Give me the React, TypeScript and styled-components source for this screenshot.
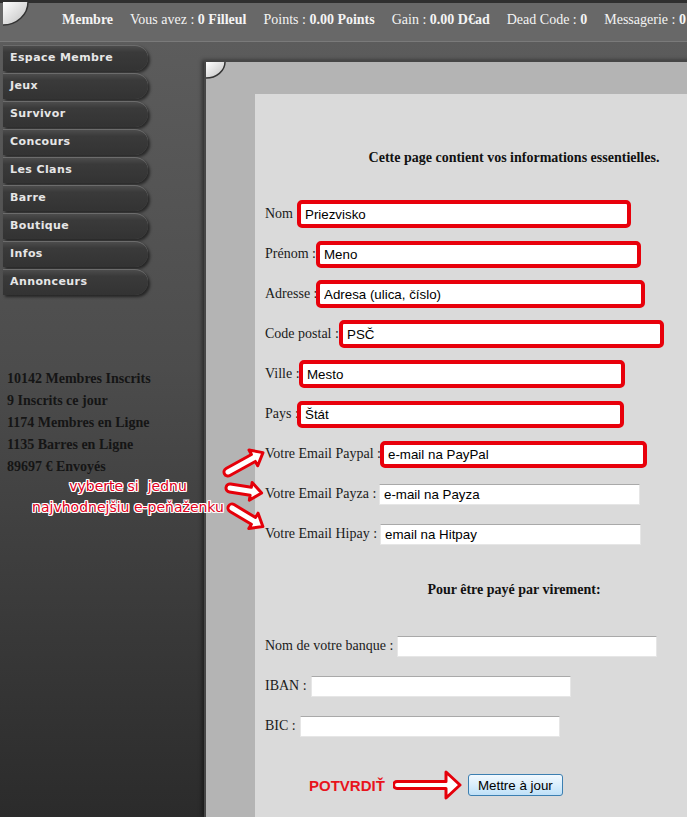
import styled, { createGlobalStyle } from "styled-components";

const GlobalStyle = createGlobalStyle`
  * { box-sizing: border-box; }
  html, body { margin: 0; padding: 0; background: #2b2b2b; overflow: hidden; }
`;

const Page = styled.div`
  position: relative;
  width: 687px;
  height: 817px;
  overflow: hidden;
  display: flex;
  flex-direction: column;
  font-family: "Liberation Serif", "Times New Roman", serif;
  background: linear-gradient(#5e5e5e, #4c4c4c 45%, #2b2b2b);
`;

const TopBar = styled.header`
  position: relative;
  flex: none;
  height: 42px;
  border-top: 3px solid #2f2f2f;
  border-bottom: 1px solid #7a7a7a;
  background: #686868;
  display: flex;
  gap: 17px;
  padding: 9px 0 0 62px;
  white-space: nowrap;
`;

const TopItem = styled.span`
  color: #f4f4f4;
  font-size: 14px;
  line-height: 16px;
`;

const B = styled.b`
  font-weight: bold;
`;

const CurlBox = styled.svg<{ $top: number; $left: number }>`
  position: absolute;
  top: ${(p) => p.$top}px;
  left: ${(p) => p.$left}px;
`;

const Body = styled.div`
  flex: 1;
  display: flex;
`;

const Sidebar = styled.aside`
  flex: none;
  width: 204px;
  padding-top: 3px;
  display: flex;
  flex-direction: column;
`;

const Menu = styled.nav`
  display: flex;
  flex-direction: column;
  gap: 2px;
`;

const MenuButton = styled.a`
  display: block;
  width: 145px;
  height: 26px;
  margin-left: 3px;
  padding-left: 7px;
  border-radius: 0 13px 13px 0;
  border-top: 1px solid #6c6c6c;
  background: linear-gradient(#4c4c4c, #3a3a3a 25%, #333 100%);
  box-shadow: 2px 2px 3px rgba(0, 0, 0, 0.55);
  color: #e6e6e6;
  font-family: "DejaVu Sans", Verdana, sans-serif;
  font-weight: bold;
  font-size: 11px;
  letter-spacing: 0.4px;
  line-height: 24px;
`;

const Stats = styled.div`
  margin-top: 73px;
  padding-left: 7px;
  color: #151515;
  font-weight: bold;
  font-size: 14px;
  line-height: 22px;
  white-space: nowrap;
`;

const Main = styled.main`
  flex: 1;
  padding-top: 18px;
  display: flex;
`;

const Panel = styled.section`
  position: relative;
  flex: 1;
  display: flex;
  border-top: 2px solid #464646;
  border-left: 2px solid #464646;
  background: #b4b4b4;
  padding: 32px 0 0 49px;
  box-shadow: -2px 0 4px rgba(0, 0, 0, 0.45);
`;

const Sheet = styled.div`
  flex: 1;
  background: #dadada;
  padding-left: 10px;
  color: #1a1a1a;
  font-size: 14px;
`;

const Heading = styled.h3<{ $top: number }>`
  width: 498px;
  margin: ${(p) => p.$top}px 0 28px;
  text-align: center;
  font-size: 14px;
  font-weight: bold;
  line-height: 16px;
  color: #111;
  white-space: nowrap;
`;

const Row = styled.div`
  display: flex;
  align-items: center;
  height: 40px;
`;

const Label = styled.label<{ $w: number }>`
  flex: none;
  width: ${(p) => p.$w}px;
  white-space: nowrap;
  line-height: 16px;
`;

const Field = styled.input<{ $w: number; $h: number; $red?: boolean }>`
  position: relative;
  flex: none;
  width: ${(p) => p.$w}px;
  height: ${(p) => p.$h}px;
  margin: 0;
  padding: 0 4px;
  background: #fff;
  color: #000;
  font-family: "Liberation Sans", Arial, sans-serif;
  font-size: 13.33px;
  outline: none;
  border: ${(p) => (p.$red ? "4px solid #e8000b" : "1px solid #e6e6e6")};
  border-top-color: ${(p) => (p.$red ? "#e8000b" : "#a9a9a9")};
  border-radius: ${(p) => (p.$red ? "5px" : "0")};
`;

const SubmitRow = styled.div`
  display: flex;
  align-items: center;
  height: 40px;
  margin-top: 19px;
  padding-left: 44px;
`;

const Confirm = styled.span`
  color: #e8141c;
  font-family: "Liberation Sans", Arial, sans-serif;
  font-weight: bold;
  font-size: 15px;
`;

const BigArrow = styled.svg`
  flex: none;
  margin-left: 8px;
`;

const UpdateButton = styled.button`
  flex: none;
  width: 95px;
  height: 22px;
  margin-left: 5px;
  padding: 0;
  border: 1px solid #3c7fb1;
  border-radius: 3px;
  background: linear-gradient(#f2f9ff, #d9eefc 50%, #bfe0f7);
  color: #000;
  font-family: "Liberation Sans", Arial, sans-serif;
  font-size: 13.33px;
`;

const Note = styled.div`
  position: absolute;
  left: 28px;
  top: 476px;
  width: 200px;
  text-align: center;
  color: #e0001b;
  font-family: "DejaVu Sans", Verdana, sans-serif;
  font-size: 14px;
  line-height: 21px;
  white-space: pre;
  text-shadow: 1px 0 #fff, -1px 0 #fff, 0 1px #fff, 0 -1px #fff, 1px 1px #fff,
    -1px -1px #fff, 1px -1px #fff, -1px 1px #fff;
`;

const ArrowLayer = styled.svg`
  position: absolute;
  left: 220px;
  top: 440px;
`;

const menu = [
  "Espace Membre",
  "Jeux",
  "Survivor",
  "Concours",
  "Les Clans",
  "Barre",
  "Boutique",
  "Infos",
  "Annonceurs",
];

const stats = [
  "10142 Membres Inscrits",
  "9 Inscrits ce jour",
  "1174 Membres en Ligne",
  "1135 Barres en Ligne",
  "89697 € Envoyés",
];

// x = left edge of the field on the page, labels start at 265
const fields = [
  { label: "Nom :", value: "Priezvisko", x: 297, w: 334, h: 28, red: true },
  { label: "Prénom :", value: "Meno", x: 316, w: 325, h: 27, red: true },
  { label: "Adresse :", value: "Adresa (ulica, číslo)", x: 316, w: 329, h: 28, red: true },
  { label: "Code postal :", value: "PSČ", x: 339, w: 325, h: 28, red: true },
  { label: "Ville :", value: "Mesto", x: 299, w: 326, h: 28, red: true },
  { label: "Pays :", value: "Štát", x: 297, w: 327, h: 27, red: true },
  { label: "Votre Email Paypal :", value: "e-mail na PayPal", x: 380, w: 267, h: 27, red: true },
  { label: "Votre Email Payza :", value: "e-mail na Payza", x: 379, w: 261, h: 21 },
  { label: "Votre Email Hipay :", value: "email na Hitpay", x: 380, w: 261, h: 21 },
];

const bank = [
  { label: "Nom de votre banque :", x: 397 },
  { label: "IBAN :", x: 311 },
  { label: "BIC :", x: 300 },
];

const arrowPath = (L: number, s: number, hw: number, hl: number) =>
  `M0,${-s} L${L - hl},${-s} L${L - hl},${-hw} L${L},0 L${L - hl},${hw} L${L - hl},${s} L0,${s} A${s},${s} 0 0 1 0,${-s} Z`;

const Curl = ({ w, h, top, left }: { w: number; h: number; top: number; left: number }) => (
  <CurlBox $top={top} $left={left} width={w + 2} height={h + 2}>
    <defs>
      <linearGradient id={`curl${w}`} x1="0" y1="0" x2="1" y2="1">
        <stop offset="0" stopColor="#ffffff" />
        <stop offset="1" stopColor="#bdbdbd" />
      </linearGradient>
    </defs>
    <path d={`M0,0 H${w} A${w} ${h} 0 0 1 0,${h} Z`} fill={`url(#curl${w})`} />
    <path d={`M${w},0 A${w} ${h} 0 0 1 0,${h}`} fill="none" stroke="#333" strokeWidth="1.5" />
  </CurlBox>
);

export default function App() {
  return (
    <Page>
      <GlobalStyle />
      <TopBar>
        <Curl w={25} h={23} top={-1} left={3} />
        <TopItem>
          <B>Membre</B>
        </TopItem>
        <TopItem>
          Vous avez : <B>0 Filleul</B>
        </TopItem>
        <TopItem>
          Points : <B>0.00 Points</B>
        </TopItem>
        <TopItem>
          Gain : <B>0.00 D€ad</B>
        </TopItem>
        <TopItem>
          Dead Code : <B>0</B>
        </TopItem>
        <TopItem>
          Messagerie : <B>0</B>
        </TopItem>
      </TopBar>

      <Body>
        <Sidebar>
          <Menu>
            {menu.map((m) => (
              <MenuButton key={m}>{m}</MenuButton>
            ))}
          </Menu>
          <Stats>
            {stats.map((s) => (
              <div key={s}>{s}</div>
            ))}
          </Stats>
        </Sidebar>

        <Main>
          <Panel>
            <Curl w={19} h={16} top={0} left={0} />
            <Sheet>
              <Heading $top={56}>Cette page contient vos informations essentielles.</Heading>
              {fields.map((f) => (
                <Row key={f.label}>
                  <Label $w={f.x - 265}>{f.label}</Label>
                  <Field $w={f.w} $h={f.h} $red={f.red} defaultValue={f.value} />
                </Row>
              ))}
              <Heading $top={28}>Pour être payé par virement:</Heading>
              {bank.map((f) => (
                <Row key={f.label}>
                  <Label $w={f.x - 265}>{f.label}</Label>
                  <Field $w={260} $h={21} defaultValue="" />
                </Row>
              ))}
              <SubmitRow>
                <Confirm>POTVRDIŤ</Confirm>
                <BigArrow width="70" height="34" viewBox="0 0 70 34">
                  <g transform="translate(4,17)">
                    <path
                      d={arrowPath(63, 3.5, 13, 14)}
                      fill="#fff"
                      stroke="#e5000a"
                      strokeWidth="3"
                      strokeLinejoin="round"
                    />
                  </g>
                </BigArrow>
                <UpdateButton type="submit">Mettre à jour</UpdateButton>
              </SubmitRow>
            </Sheet>
          </Panel>
        </Main>
      </Body>

      <Note>{"vyberte si  jednu\nnajvhodnejšiu e-peňaženku"}</Note>
      <ArrowLayer width="50" height="100" viewBox="0 0 50 100">
        {[
          { x: 8, y: 32, a: -29, L: 40 },
          { x: 10, y: 48, a: 9, L: 32 },
          { x: 12, y: 68, a: 31, L: 36 },
        ].map((r, i) => (
          <g key={i} transform={`translate(${r.x},${r.y}) rotate(${r.a})`}>
            <path
              d={arrowPath(r.L, 4, 9, 11)}
              fill="#fff"
              stroke="#e5000a"
              strokeWidth="3"
              strokeLinejoin="round"
            />
          </g>
        ))}
      </ArrowLayer>
    </Page>
  );
}
